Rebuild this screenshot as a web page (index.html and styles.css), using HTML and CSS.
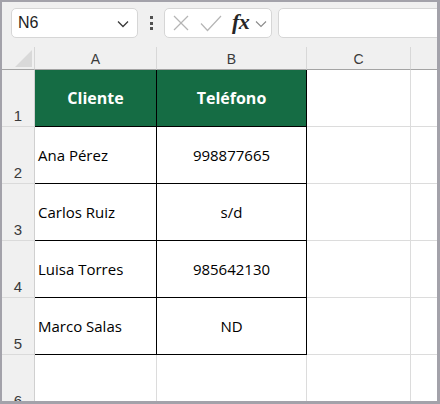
FILE: index.html
```html
<!DOCTYPE html>
<html>
<head>
<meta charset="utf-8">
<link rel="stylesheet" href="styles.css">
</head>
<body>
<div class="frame">
  <div class="toolbar">
    <div class="namebox">
      <span class="nametext">N6</span>
      <svg class="chev" width="12" height="8" viewBox="0 0 12 8"><polyline points="1,1.5 6,6.5 11,1.5" fill="none" stroke="#3a3a3a" stroke-width="1.3"/></svg>
    </div>
    <div class="dots"><span></span><span></span><span></span></div>
    <div class="fbtns">
      <svg class="xicon" width="16" height="16" viewBox="0 0 16 16"><line x1="1" y1="1" x2="15" y2="15" stroke="#b5b5b5" stroke-width="1.2"/><line x1="15" y1="1" x2="1" y2="15" stroke="#b5b5b5" stroke-width="1.2"/></svg>
      <svg class="check" width="22" height="17" viewBox="0 0 22 17"><polyline points="1,8.5 7.5,15.5 21,1" fill="none" stroke="#b5b5b5" stroke-width="1.2"/></svg>
      <span class="fx">fx</span>
      <svg class="chev2" width="12" height="8" viewBox="0 0 12 8"><polyline points="1,1.5 6,6.5 11,1.5" fill="none" stroke="#8a8a8a" stroke-width="1.1"/></svg>
    </div>
    <div class="finput"></div>
  </div>
  <div class="grid">
    <div class="corner"><div class="tri"></div></div>
    <div class="colh">A</div>
    <div class="colh">B</div>
    <div class="colh">C</div>
    <div class="colh last"></div>

    <div class="rowh">1</div>
    <div class="cell head">Cliente</div>
    <div class="cell head">Teléfono</div>
    <div class="cell empty"></div>
    <div class="cell empty last"></div>

    <div class="rowh">2</div>
    <div class="cell data left">Ana Pérez</div>
    <div class="cell data">998877665</div>
    <div class="cell empty"></div>
    <div class="cell empty last"></div>

    <div class="rowh">3</div>
    <div class="cell data left">Carlos Ruiz</div>
    <div class="cell data">s/d</div>
    <div class="cell empty"></div>
    <div class="cell empty last"></div>

    <div class="rowh">4</div>
    <div class="cell data left">Luisa Torres</div>
    <div class="cell data">985642130</div>
    <div class="cell empty"></div>
    <div class="cell empty last"></div>

    <div class="rowh">5</div>
    <div class="cell data left">Marco Salas</div>
    <div class="cell data">ND</div>
    <div class="cell empty"></div>
    <div class="cell empty last"></div>

    <div class="rowh">6</div>
    <div class="cell blank"></div>
    <div class="cell blank"></div>
    <div class="cell empty"></div>
    <div class="cell empty last"></div>
  </div>
</div>
</body>
</html>
```

FILE: styles.css
```css
* { box-sizing: border-box; }
html, body { margin: 0; padding: 0; }
body { width: 440px; height: 404px; overflow: hidden; font-family: "Open Sans", "Liberation Sans", sans-serif; }
.frame {
  width: 440px; height: 404px;
  border-style: solid; border-color: #a3a2aa;
  border-width: 2px 3px 3px 2px;
  background: #f0f0f0;
  overflow: hidden;
  display: flex; flex-direction: column;
}
.toolbar {
  height: 45px; flex: none;
  display: flex; align-items: flex-start;
  padding: 6px 0 0 9px;
}
.namebox {
  width: 127px; height: 30px;
  background: #fff; border: 1px solid #d6d6d6; border-radius: 5px;
  display: flex; align-items: center; justify-content: space-between;
  padding: 0 8px 0 6px;
}
.nametext { font-family: "Liberation Sans", Arial, sans-serif; font-size: 16px; color: #1e1e1e; }
.chev { margin-top: 1px; }
.dots {
  width: 26px; height: 30px;
  display: flex; flex-direction: column; align-items: center; justify-content: center; gap: 2.5px;
}
.dots span { width: 3px; height: 3px; background: #505050; display: block; }
.fbtns {
  width: 108px; height: 30px;
  background: #fff; border: 1px solid #d6d6d6; border-radius: 5px;
  display: flex; align-items: center;
  padding-left: 8px;
}
.xicon { margin-right: 11px; }
.check { margin-right: 10px; }
.fx {
  font-family: "Liberation Serif", "DejaVu Serif", serif; font-style: italic; font-weight: bold;
  font-size: 22px; color: #262626; line-height: 1; margin-top: -3px;
  letter-spacing: -0.5px;
}
.chev2 { margin-left: 6px; margin-top: 2px; }
.finput {
  flex: 1; height: 30px; margin-left: 6px; margin-right: -8px;
  background: #fff; border: 1px solid #d6d6d6; border-radius: 5px;
}
.grid {
  flex: 1;
  display: grid;
  grid-template-columns: 33px 122px 150px 104px 26px;
  grid-template-rows: 23px 57px 57px 57px 57px 57px 57px;
  overflow: hidden;
}
.corner {
  border-bottom: 1px solid #a4a4a4; border-right: 1px solid #d6d6d6;
  position: relative;
}
.tri {
  position: absolute; left: 13px; top: 3px; width: 17px; height: 17px;
  background: #d9d9d9;
  clip-path: polygon(100% 0, 100% 100%, 0 100%);
}
.colh {
  border-bottom: 1px solid #a4a4a4; border-right: 1px solid #d8d8d8;
  display: flex; align-items: center; justify-content: center;
  font-family: "Liberation Sans", Arial, sans-serif; font-size: 14px; color: #3a3a3a;
  padding-top: 1px;
}
.colh.last { border-right: none; }
.rowh {
  border-bottom: 1px solid #dadada; border-right: 1px solid #d0d0d0;
  display: flex; align-items: flex-end; justify-content: center;
  font-family: "Liberation Sans", Arial, sans-serif; font-size: 15px; color: #3a3a3a;
  padding-bottom: 2px;
}
.cell {
  background: #fff;
  border-right: 1px solid #000; border-bottom: 1px solid #000;
  display: flex; align-items: center; justify-content: center;
  font-size: 15px; color: #000;
}
.cell.head {
  background: #156c44; color: #fff; font-weight: bold; font-size: 16px;
}
.cell.left { justify-content: flex-start; padding-left: 3px; }
.cell.empty { border-right-color: #dcdcdc; border-bottom-color: #dcdcdc; }
.cell.empty.last { border-right: none; }
.cell.blank { border-right-color: #dcdcdc; border-bottom-color: #dcdcdc; }
```
